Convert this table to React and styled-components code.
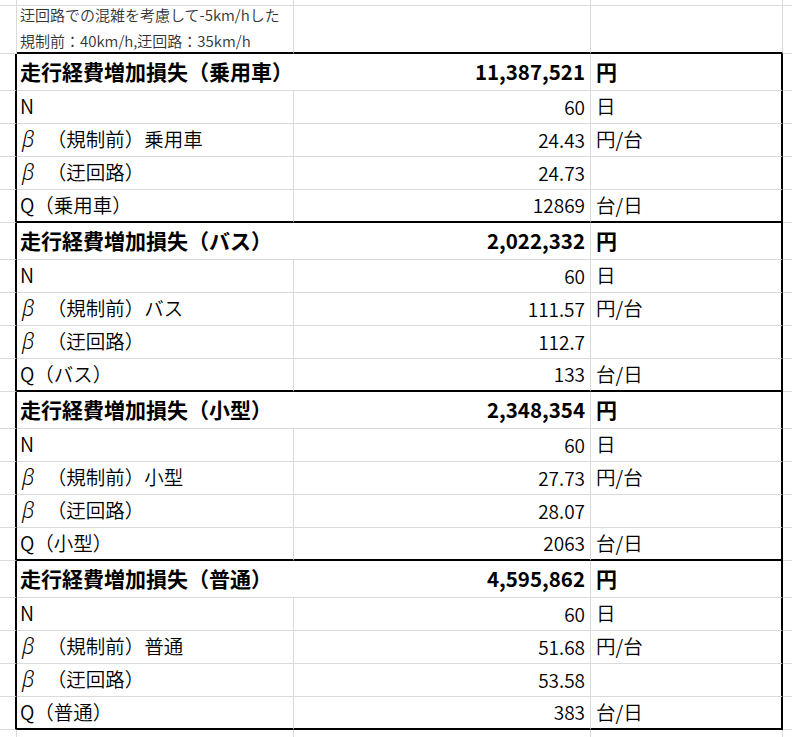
import React from 'react'
import { styled, css, createGlobalStyle } from 'styled-components'

const groups = [
  { name: '乗用車', total: '11,387,521', before: '24.43', detour: '24.73', q: '12869' },
  { name: 'バス', total: '2,022,332', before: '111.57', detour: '112.7', q: '133' },
  { name: '小型', total: '2,348,354', before: '27.73', detour: '28.07', q: '2063' },
  { name: '普通', total: '4,595,862', before: '51.68', detour: '53.58', q: '383' },
]

const line = {
  grid: '1px solid #dadada',
  edge: '2px solid #000',
  none: 'none',
}

const GlobalStyle = createGlobalStyle`
  body {
    margin: 0;
    background: #fff;
    color: #000;
    font-family: "Noto Sans CJK JP", "Noto Sans", sans-serif;
  }
`

const Sheet = styled.div`
  display: grid;
  grid-template-columns: 17px 277px 297px 192px 1fr;
  width: 792px;
  height: 737px;
  overflow: hidden;
`

const cellBase = css`
  box-sizing: border-box;
  height: ${({ $h }) => $h}px;
  border-bottom: ${({ $bottom }) => line[$bottom || 'grid']};
  display: flex;
  align-items: center;
  white-space: nowrap;
  min-width: 0;
  line-height: 1;
  font-weight: ${({ $head }) => ($head ? 700 : 350)};
`

const GutterCell = styled.div`
  ${cellBase};
  border-right: ${({ $table }) => ($table ? line.edge : line.grid)};
`

const LabelCell = styled.div`
  ${cellBase};
  padding: 0 0 2px 3px;
  border-right: ${({ $overflow }) => ($overflow ? line.none : line.grid)};
  font-size: ${({ $head }) => ($head ? '21px' : '19.5px')};
  overflow: visible;
`

const ValueCell = styled.div`
  ${cellBase};
  justify-content: flex-end;
  padding: 0 5px 2px 0;
  border-right: ${line.grid};
  font-size: ${({ $head }) => ($head ? '20.5px' : '19px')};
`

const UnitCell = styled.div`
  ${cellBase};
  padding: 0 0 2px 5px;
  border-right: ${({ $table }) => ($table ? line.edge : line.grid)};
  font-size: ${({ $head }) => ($head ? '21px' : '19.5px')};
`

const FillerCell = styled.div`
  ${cellBase};
`

const Note = styled.div`
  display: flex;
  flex-direction: column;
  font-size: 15px;
  line-height: 26px;
  color: #333;
`

const Beta = styled.span`
  display: inline-block;
  width: 1.25em;
  padding-left: 2px;
  box-sizing: border-box;
  font-style: italic;
  font-weight: 300;
  font-family: "Noto Sans", sans-serif;
  font-size: 1.1em;
`

const Row = ({ h, bottom, table, head, label, value, unit }) => (
  <>
    <GutterCell $h={h} $table={table} />
    <LabelCell $h={h} $bottom={table ? bottom : 'grid'} $overflow={head} $head={head}>
      {label}
    </LabelCell>
    <ValueCell $h={h} $bottom={table ? bottom : 'grid'} $head={head}>
      {value}
    </ValueCell>
    <UnitCell $h={h} $bottom={table ? bottom : 'grid'} $table={table} $head={head}>
      {unit}
    </UnitCell>
    <FillerCell $h={h} />
  </>
)

const Group = ({ name, total, before, detour, q }) => (
  <>
    <Row h={37} table head label={`走行経費増加損失（${name}）`} value={total} unit="円" />
    <Row h={33} table label="N" value="60" unit="日" />
    <Row h={33} table label={<><Beta>β</Beta>（規制前）{name}</>} value={before} unit="円/台" />
    <Row h={33} table label={<><Beta>β</Beta>（迂回路）</>} value={detour} />
    <Row h={33} table bottom="edge" label={`Q（${name}）`} value={q} unit="台/日" />
  </>
)

export default function App() {
  return (
    <>
      <GlobalStyle />
      <Sheet>
        <Row h={6} />
        <GutterCell $h={48} />
        <LabelCell $h={48} $bottom="edge">
          <Note>
            <span>迂回路での混雑を考慮して-5km/hした</span>
            <span>規制前：40km/h,迂回路：35km/h</span>
          </Note>
        </LabelCell>
        <ValueCell $h={48} $bottom="edge" />
        <UnitCell $h={48} $bottom="edge" />
        <FillerCell $h={48} />
        {groups.map((g) => (
          <Group key={g.name} {...g} />
        ))}
        <Row h={33} />
      </Sheet>
    </>
  )
}
